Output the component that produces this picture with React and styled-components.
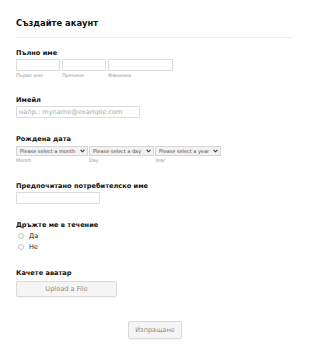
import React from "react";
import styled, { createGlobalStyle } from "styled-components";

const Global = createGlobalStyle`
  html, body { margin: 0; padding: 0; background: #fff; }
  body { font-family: "DejaVu Sans", Verdana, sans-serif; color: #111; }
  * { box-sizing: border-box; }
`;

const Page = styled.form`
  width: 310px;
  padding: 16px 17px 16px 16px;
  display: flex;
  flex-direction: column;
`;

const Title = styled.h1`
  margin: 0;
  font-size: 8.4px;
  line-height: 14px;
  font-weight: bold;
  color: #111;
`;

const Divider = styled.hr`
  margin: 7px 0 0;
  border: 0;
  border-top: 1px solid #ececec;
  height: 0;
`;

const Field = styled.div`
  margin-top: ${(p) => p.$gap}px;
  display: flex;
  flex-direction: column;
`;

const Label = styled.div`
  font-size: 6.6px;
  line-height: 10px;
  font-weight: bold;
  color: #111;
  margin-bottom: ${(p) => p.$mb ?? 1}px;
  white-space: nowrap;
`;

const Row = styled.div`
  display: flex;
  gap: ${(p) => p.$gap}px;
`;

const Col = styled.div`
  display: flex;
  flex-direction: column;
  width: ${(p) => p.$w}px;
`;

const Input = styled.input`
  width: ${(p) => p.$w}px;
  height: 12px;
  margin: 0;
  padding: 0 2px;
  border: 1px solid #dcdcdc;
  background: #fff;
  font-family: inherit;
  font-size: 6.6px;
  color: #333;
  outline: none;
  &::placeholder { color: #a8a8a8; }
`;

const SubLabel = styled.span`
  margin-top: 1px;
  font-size: 4.8px;
  line-height: 7px;
  color: #999;
  white-space: nowrap;
`;

const SelectBox = styled.div`
  width: ${(p) => p.$w}px;
  height: 10px;
  border: 1px solid #d6d6d6;
  background: #f2f2f2;
  display: flex;
  align-items: center;
  justify-content: space-between;
  padding: 0 2px 0 3px;
  font-size: 5px;
  color: #444;
  white-space: nowrap;
  overflow: hidden;
`;

const Chevron = () => (
  <svg width="5" height="4" viewBox="0 0 5 4">
    <polyline points="0.6,0.8 2.5,2.8 4.4,0.8" fill="none" stroke="#333" strokeWidth="1.1" />
  </svg>
);

const RadioRow = styled.label`
  display: flex;
  align-items: center;
  height: 10.5px;
  padding-left: 2px;
  font-size: 6.6px;
  color: #222;
`;

const RadioDot = styled.span`
  width: 6px;
  height: 6px;
  border: 1px solid #c4c4c4;
  border-radius: 50%;
  background: #fff;
  margin-right: 5px;
`;

const Button = styled.button`
  width: ${(p) => p.$w}px;
  height: ${(p) => p.$h}px;
  margin: 0;
  padding: 0;
  border: 1px solid #dadada;
  border-radius: 2px;
  background: #f5f5f5;
  font-family: inherit;
  font-size: 6.6px;
  color: #8a8a8a;
  box-shadow: 0 1px 0 rgba(0,0,0,0.04);
`;

const SubmitWrap = styled.div`
  margin-top: 24px;
  display: flex;
  justify-content: center;
  padding-left: 1px;
`;

export default function App() {
  return (
    <>
      <Global />
      <Page onSubmit={(e) => e.preventDefault()}>
        <Title>Създайте акаунт</Title>
        <Divider />

        <Field $gap={10}>
          <Label>Пълно име</Label>
          <Row $gap={2}>
            <Col $w={44}><Input $w={44} /><SubLabel>Първо име</SubLabel></Col>
            <Col $w={44}><Input $w={44} /><SubLabel>Презиме</SubLabel></Col>
            <Col $w={65}><Input $w={65} /><SubLabel>Фамилия</SubLabel></Col>
          </Row>
        </Field>

        <Field $gap={16}>
          <Label>Имейл</Label>
          <Input $w={124} placeholder="напр.: myname@example.com" />
        </Field>

        <Field $gap={16}>
          <Label $mb={2}>Рождена дата</Label>
          <Row $gap={1}>
            <Col $w={72}><SelectBox $w={72}>Please select a month <Chevron /></SelectBox><SubLabel>Month</SubLabel></Col>
            <Col $w={65}><SelectBox $w={65}>Please select a day <Chevron /></SelectBox><SubLabel>Day</SubLabel></Col>
            <Col $w={66}><SelectBox $w={66}>Please select a year <Chevron /></SelectBox><SubLabel>Year</SubLabel></Col>
          </Row>
        </Field>

        <Field $gap={17}>
          <Label>Предпочитано потребителско име</Label>
          <Input $w={84} />
        </Field>

        <Field $gap={16}>
          <Label>Дръжте ме в течение</Label>
          <RadioRow><RadioDot />Да</RadioRow>
          <RadioRow><RadioDot />Не</RadioRow>
        </Field>

        <Field $gap={16}>
          <Label $mb={3}>Качете аватар</Label>
          <Button type="button" $w={101} $h={16}>Upload a File</Button>
        </Field>

        <SubmitWrap>
          <Button type="submit" $w={54} $h={18}>Изпращане</Button>
        </SubmitWrap>
      </Page>
    </>
  );
}
